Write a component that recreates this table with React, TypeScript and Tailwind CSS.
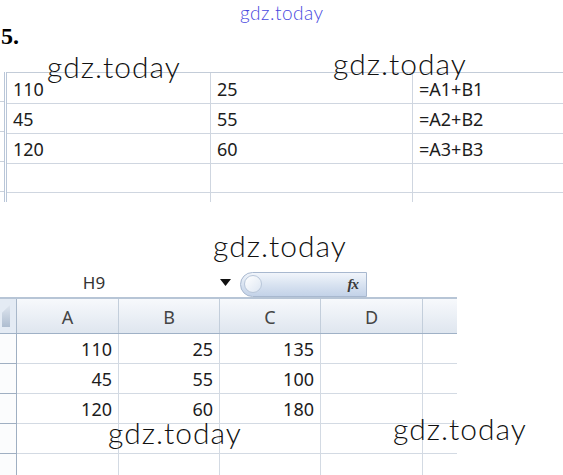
const cellFont = { fontFamily: '"Noto Sans", "Open Sans", sans-serif' };

const topRows = [
  ['110', '25', '=A1+B1'],
  ['45', '55', '=A2+B2'],
  ['120', '60', '=A3+B3'],
  ['', '', ''],
];

const bottomRows = [
  ['110', '25', '135'],
  ['45', '55', '100'],
  ['120', '60', '180'],
  ['', '', ''],
  ['', '', ''],
];

const bottomCols = ['A', 'B', 'C', 'D'];

function Watermark({ className }: { className: string }) {
  return (
    <span
      className={`absolute font-light text-[30px] leading-none text-[#111] tracking-[1px] ${className}`}
      style={{ fontFamily: 'Lato, "DejaVu Sans", sans-serif' }}
    >
      gdz.today
    </span>
  );
}

function TopTable() {
  return (
    <div className="flex h-[130px] overflow-hidden">
      {/* row header remnant */}
      <div className="w-[7px] border-r-[3px] border-double border-[#b9c6d8]">
        {topRows.map((_, i) => (
          <div key={i} className="h-[30px] border-b border-[#c9d1dc]" />
        ))}
      </div>
      <div className="flex-1 border-t border-[#c3ccd8]">
        {topRows.map((row, i) => (
          <div key={i} className="grid grid-cols-[204px_202px_1fr] h-[30px]">
            {row.map((v, j) => (
              <div
                key={j}
                className={`flex items-center pt-[3px] pl-[6px] text-[18px] text-[#1c1c1c] border-b border-[#cfd6e0] ${j < 2 ? 'border-r' : ''}`}
                style={cellFont}
              >
                {v}
              </div>
            ))}
          </div>
        ))}
        <div className="grid grid-cols-[204px_202px_1fr] h-[10px]">
          <div className="border-r border-[#cfd6e0]" />
          <div className="border-r border-[#cfd6e0]" />
          <div />
        </div>
      </div>
    </div>
  );
}

function FormulaBar() {
  return (
    <div className="flex items-end h-[29px] w-[457px]">
      <div className="w-[188px] h-full flex items-center justify-center text-[17px] text-[#333]" style={cellFont}>
        H9
      </div>
      <div className="w-[52px] h-full flex items-center justify-start pl-[32px]">
        <svg width="11" height="7" viewBox="0 0 11 7">
          <path d="M0 0 H11 L5.5 7 Z" fill="#111" />
        </svg>
      </div>
      <div className="relative w-[127px] h-[25px] rounded-l-[13px] border border-[#a8b8cf] bg-gradient-to-b from-[#f1f5fb] via-[#d9e3f1] to-[#c3d2e8] flex items-center justify-end pr-[8px]">
        <div className="absolute left-[3px] top-[2px] w-[18px] h-[18px] rounded-full border border-[#b9c7da] bg-gradient-to-br from-white to-[#dde6f2]" />
        <span
          className="italic font-bold text-[15px] text-[#3a3a3a] tracking-[-1px]"
          style={{ fontFamily: '"Liberation Serif", serif' }}
        >
          fx
        </span>
      </div>
    </div>
  );
}

function BottomTable() {
  return (
    <div className="w-[457px] border-t-2 border-[#b7c5d6]">
      <div className="grid grid-cols-[17px_102px_101px_101px_102px_34px] h-[35px] bg-gradient-to-b from-[#f7f9fc] to-[#dfe6ef] border-b border-[#9fb1c6]">
        <div className="relative border-r border-[#a9b8ca] bg-[#e4ebf4]">
          <div className="absolute left-[2px] top-[6px] w-[8px] h-[22px] bg-gradient-to-b from-[#dfe6ef] to-[#aebdd0] [clip-path:polygon(100%_0,100%_100%,0_100%,0_35%)]" />
        </div>
        {bottomCols.map((c) => (
          <div
            key={c}
            className="flex items-center justify-center pt-[2px] text-[18px] text-[#444] border-r border-[#c3cedb]"
            style={cellFont}
          >
            {c}
          </div>
        ))}
        <div />
      </div>
      {bottomRows.map((row, i) => (
        <div key={i} className="grid grid-cols-[17px_102px_101px_101px_102px_34px] h-[30px]">
          <div className="border-r border-b border-[#9fafc2] bg-[#fbfcfd]" />
          {row.map((v, j) => (
            <div
              key={j}
              className="flex items-center justify-end pt-[2px] pr-[6px] text-[18px] text-[#1c1c1c] border-r border-b border-[#d3dae3]"
              style={cellFont}
            >
              {v}
            </div>
          ))}
          <div className="border-r border-b border-[#d3dae3]" />
          <div className="border-b border-[#d3dae3]" />
        </div>
      ))}
    </div>
  );
}

export default function App() {
  return (
    <div className="relative w-[563px] h-[475px] overflow-hidden bg-white">
      <div className="h-[72px] pt-[24px] pl-[1px]">
        <span className="font-bold text-[24px] leading-none text-black" style={{ fontFamily: '"Liberation Serif", serif' }}>
          5.
        </span>
      </div>
      <TopTable />
      <div className="mt-[66px]">
        <FormulaBar />
      </div>
      <BottomTable />

      {/* watermarks over the page */}
      <span
        className="absolute left-[240px] top-[3px] font-light text-[19px] leading-none text-[#4848e0] tracking-[0.5px]"
        style={{ fontFamily: 'Lato, "DejaVu Sans", sans-serif' }}
      >
        gdz.today
      </span>
      <Watermark className="left-[47px] top-[51px]" />
      <Watermark className="left-[333px] top-[48px]" />
      <Watermark className="left-[213px] top-[230px]" />
      <Watermark className="left-[108px] top-[417px]" />
      <Watermark className="left-[393px] top-[413px]" />
    </div>
  );
}
